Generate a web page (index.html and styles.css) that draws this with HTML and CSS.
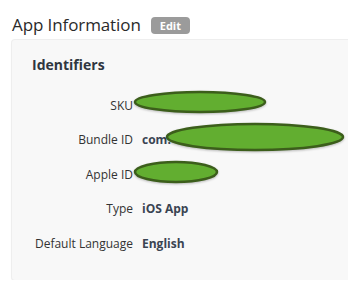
FILE: index.html
```html
<!DOCTYPE html>
<html lang="en">
<head>
    <meta charset="UTF-8">
    <title>App Information</title>
    <link rel="stylesheet" href="styles.css">
</head>
<body>
<div class="page">
    <header class="head">
        <h1>App Information</h1>
        <span class="edit">Edit</span>
    </header>
    <section class="panel">
        <h2>Identifiers</h2>
        <div class="rows">
            <span class="label">SKU</span>
            <span class="value"></span>
            <span class="label">Bundle ID</span>
            <span class="value">com.</span>
            <span class="label">Apple ID</span>
            <span class="value"></span>
            <span class="label">Type</span>
            <span class="value">iOS App</span>
            <span class="label">Default Language</span>
            <span class="value">English</span>
        </div>

        <!-- redaction marks -->
        <svg class="blot blot-sku" width="138" height="28" viewBox="0 0 138 28">
            <ellipse cx="67" cy="13" rx="65" ry="10" class="shade"/>
            <ellipse cx="67" cy="12" rx="65" ry="10"/>
        </svg>
        <svg class="blot blot-bundle" width="184" height="34" viewBox="0 0 184 34">
            <ellipse cx="90" cy="16" rx="88" ry="13" class="shade"/>
            <ellipse cx="90" cy="15" rx="88" ry="13"/>
        </svg>
        <svg class="blot blot-apple" width="90" height="28" viewBox="0 0 90 28">
            <ellipse cx="43" cy="13" rx="41" ry="10" class="shade"/>
            <ellipse cx="43" cy="12" rx="41" ry="10"/>
        </svg>
    </section>
</div>
</body>
</html>
```

FILE: styles.css
```css
body {
    margin: 0;
    background: #fff;
    font-family: 'Open Sans', 'DejaVu Sans', sans-serif;
    color: #333;
    overflow: hidden;
}

.page {
    padding: 12px 0 0 12px;
}

.head {
    display: flex;
    align-items: center;
    gap: 10px;
    height: 24px;
}

.head h1 {
    margin: 0;
    font-size: 17px;
    font-weight: 400;
    color: #2a2a2a;
    letter-spacing: -0.1px;
}

.edit {
    background: #9b9b9b;
    color: #fff;
    font-size: 11px;
    font-weight: 700;
    border-radius: 4px;
    padding: 0 9px;
    height: 17px;
    line-height: 17px;
    margin-top: 2px;
}

.panel {
    position: relative;
    margin-top: 4px;
    margin-right: -10px;
    height: 240px;
    box-sizing: border-box;
    background: #f8f8f8;
    border-radius: 3px;
    box-shadow: 0 0 0 1px #eee, 0 1px 2px rgba(0, 0, 0, 0.08);
    padding: 14px 0 0 20px;
}

.panel h2 {
    margin: 0;
    font-size: 14px;
    font-weight: 700;
    color: #2f3640;
    line-height: 22px;
}

.rows {
    display: grid;
    grid-template-columns: 121px auto;
    column-gap: 9px;
    grid-auto-rows: 34.4px;
    margin: 13px 0 0 -20px;
    font-size: 12px;
    line-height: 34.4px;
    white-space: nowrap;
}

.label {
    text-align: right;
    color: #333;
}

.value {
    font-weight: 700;
    color: #3a4452;
}

.blot {
    position: absolute;
    filter: drop-shadow(0 1px 1px rgba(0, 0, 0, 0.25));
}

.blot ellipse {
    fill: #62ae30;
    stroke: #3c5e1b;
    stroke-width: 2.5;
}

.blot ellipse.shade {
    fill: rgba(0, 0, 0, 0.15);
    stroke: none;
}

.blot-sku {
    left: 121px;
    top: 50px;
}

.blot-bundle {
    left: 153px;
    top: 82px;
}

.blot-apple {
    left: 121px;
    top: 120px;
}
```
